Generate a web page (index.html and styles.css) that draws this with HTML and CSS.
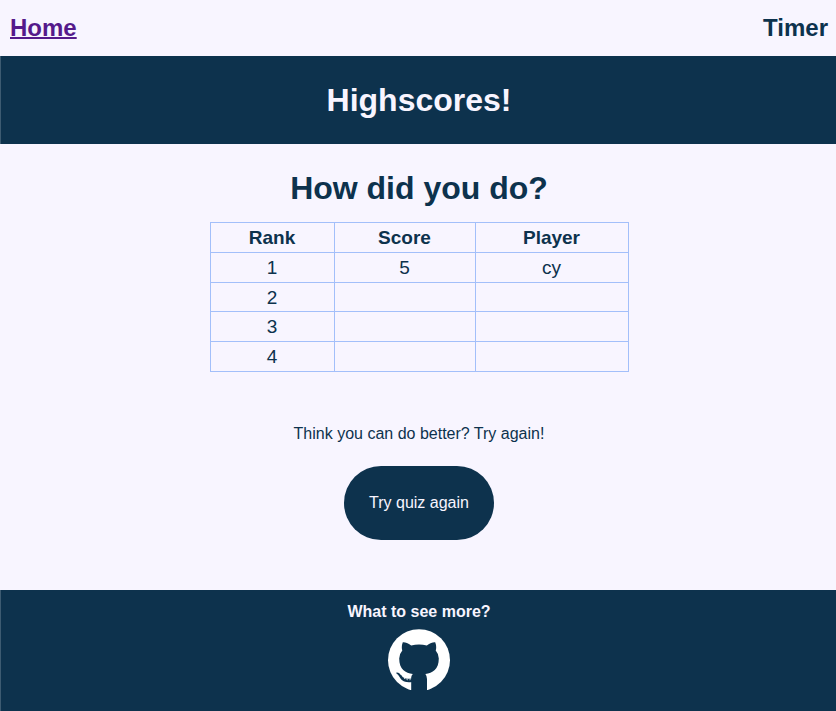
FILE: index.html
```html
<!DOCTYPE html>
<html lang="en">
<head>
<meta charset="utf-8">
<title>Highscores</title>
<link rel="stylesheet" href="styles.css">
</head>
<body>
<nav class="topbar"><a class="home" href="#">Home</a><span class="timer">Timer</span></nav>
<header class="banner"><h1>Highscores!</h1></header>
<main class="content">
<h2>How did you do?</h2>
<table class="scores">
<colgroup><col class="rank"><col class="score"><col class="player"></colgroup>
<tr><th>Rank</th><th>Score</th><th>Player</th></tr>
<tr><td>1</td><td>5</td><td>cy</td></tr>
<tr class="compact"><td>2</td><td></td><td></td></tr>
<tr><td>3</td><td></td><td></td></tr>
<tr><td>4</td><td></td><td></td></tr>
</table>
<p class="prompt">Think you can do better? Try again!</p>
<button class="retry" type="button">Try quiz again</button>
</main>
<footer class="footer">
<p>What to see more?</p>
<svg class="github" viewBox="0 0 62 61" aria-hidden="true">
<circle class="disc" cx="31" cy="31.2" r="31"/>
<path class="cat" d="M23.2 62V48.5Q23.2 46.5 24.8 45C17.5 44 11.2 40.5 11.2 29.5Q11.2 25 14.3 21.5Q13.1 17.5 14.8 13.2Q18 12.8 23.2 16.4Q31 14.6 38.8 16.4Q44 12.8 47.2 13.2Q48.9 17.5 47.7 21.5Q50.8 25 50.8 29.5C50.8 40.5 44.5 44 37.4 45Q39 47 39 50V62Z"/>
<path class="tail" d="M8.4 43.4C13.2 43 13.6 49.2 19.5 49.8Q21.5 50 24 49.5V53C16 54.2 13.2 51 11.4 47.8Q10.2 45 8.4 44.4Z"/>
<path class="cups" d="M12.8 45.3C15 48 16 50.2 19.4 50.7Q21.5 51 23.3 50.4"/>
</svg>
</footer>
</body>
</html>
```
FILE: styles.css
```css
* { box-sizing: border-box; }
body { margin: 0; min-height: 711px; display: flex; flex-direction: column; background: #f8f5ff; color: #0d324d; font-family: "Liberation Sans", Arial, sans-serif; }
h1, h2, p { margin: 0; }
.topbar { height: 56px; padding: 0 8px 0 10px; display: flex; justify-content: space-between; align-items: center; font-size: 24px; font-weight: 700; }
.home { color: #551a8b; text-decoration-thickness: 2px; }
.banner, .footer { border-left: 1px solid #3d5b71; }
.banner { height: 88px; display: flex; align-items: center; justify-content: center; padding-left: 1px; background: #0d324d; color: #f8f5ff; }
h1, h2 { font-size: 32px; line-height: 36px; }
.content { height: 446px; padding: 26px 0 0 2px; display: flex; flex-direction: column; align-items: center; }
.scores { width: 419px; margin-top: 16px; border-collapse: collapse; table-layout: fixed; font-size: 19px; text-align: center; }
.rank { width: 124px; }
.score { width: 141px; }
.player { width: 153px; }
.scores th, .scores td { height: 30px; padding: 0; border: 1px solid #a3bffa; line-height: 22px; }
.scores .compact td { height: 29px; padding-top: 1px; }
.prompt { margin-top: 52px; font-size: 16px; line-height: 20px; }
.retry { margin-top: 22px; width: 150px; height: 74px; padding: 0; border: 0; border-radius: 37px; background: #0d324d; color: #f8f5ff; font: 16px "Liberation Sans", Arial, sans-serif; }
.footer { height: 121px; padding: 12px 0 0 1px; display: flex; flex-direction: column; align-items: center; background: #0d324d; color: #f8f5ff; font-size: 16px; font-weight: 700; line-height: 19px; }
.github { width: 62px; height: 61px; margin-top: 8px; }
.disc { fill: #fff; }
.cat, .tail { fill: #0d324d; }
.cups { fill: none; stroke: #fff; stroke-width: 1; stroke-dasharray: 1 1.7; }
```
